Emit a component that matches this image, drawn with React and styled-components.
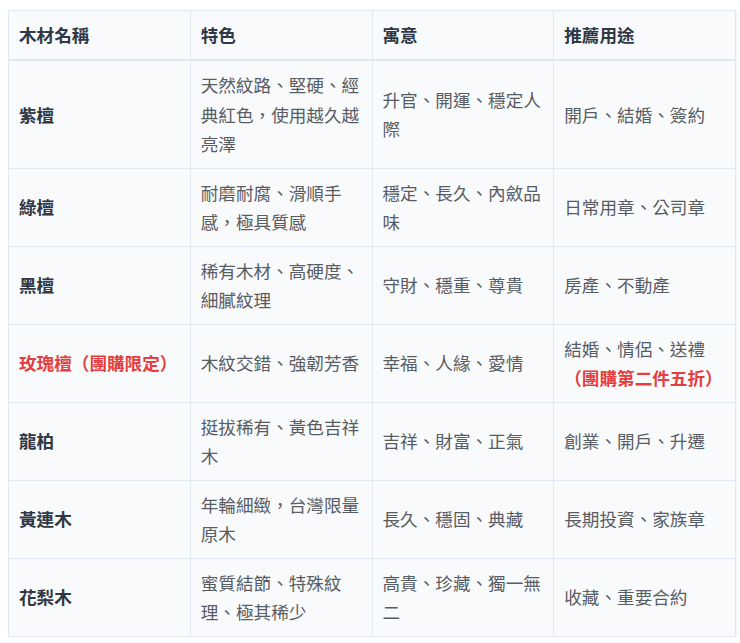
import React from "react";
import styled, { createGlobalStyle } from "styled-components";

const GlobalStyle = createGlobalStyle`
  body {
    margin: 0;
    background: #ffffff;
    font-family: "Noto Sans CJK TC", "Noto Sans", sans-serif;
  }
`;

const Page = styled.div`
  padding: 10px 4px 0 8px;
`;

const Table = styled.table`
  width: 728px;
  table-layout: fixed;
  border-collapse: collapse;
  background: #f8fafc;
  font-size: 17.6px;
  line-height: 29.5px;
  box-shadow: 1px 1px 3px rgba(0, 0, 0, 0.06);
`;

const Th = styled.th`
  text-align: left;
  font-weight: 700;
  color: #2f3844;
  padding: 9px 10px;
  line-height: 30px;
  border: 1px solid #e2e8f0;
  border-bottom: 2px solid #e2e8f0;
`;

const Td = styled.td`
  vertical-align: middle;
  padding: 9px 10px;
  border: 1px solid #e2e8f0;
  color: ${(p) => (p.$name ? "#2f3844" : "#585c63")};
  font-weight: ${(p) => (p.$name ? 700 : 400)};
`;

const Highlight = styled.span`
  color: #e53e3e;
  font-weight: 700;
`;

const rows = [
  ["紫檀", "天然紋路、堅硬、經典紅色，使用越久越亮澤", "升官、開運、穩定人際", "開戶、結婚、簽約"],
  ["綠檀", "耐磨耐腐、滑順手感，極具質感", "穩定、長久、內斂品味", "日常用章、公司章"],
  ["黑檀", "稀有木材、高硬度、細膩紋理", "守財、穩重、尊貴", "房產、不動產"],
  [
    <Highlight>玫瑰檀（團購限定）</Highlight>,
    "木紋交錯、強韌芳香",
    "幸福、人緣、愛情",
    <>
      結婚、情侶、送禮
      <br />
      <Highlight>（團購第二件五折）</Highlight>
    </>,
  ],
  ["龍柏", "挺拔稀有、黃色吉祥木", "吉祥、財富、正氣", "創業、開戶、升遷"],
  ["黃連木", "年輪細緻，台灣限量原木", "長久、穩固、典藏", "長期投資、家族章"],
  ["花梨木", "蜜質結節、特殊紋理、極其稀少", "高貴、珍藏、獨一無二", "收藏、重要合約"],
];

export default function App() {
  return (
    <>
      <GlobalStyle />
      <Page lang="zh-TW">
        <Table>
          <thead>
            <tr>
              <Th>木材名稱</Th>
              <Th>特色</Th>
              <Th>寓意</Th>
              <Th>推薦用途</Th>
            </tr>
          </thead>
          <tbody>
            {rows.map((r, i) => (
              <tr key={i}>
                <Td $name>{r[0]}</Td>
                <Td>{r[1]}</Td>
                <Td>{r[2]}</Td>
                <Td>{r[3]}</Td>
              </tr>
            ))}
          </tbody>
        </Table>
      </Page>
    </>
  );
}
